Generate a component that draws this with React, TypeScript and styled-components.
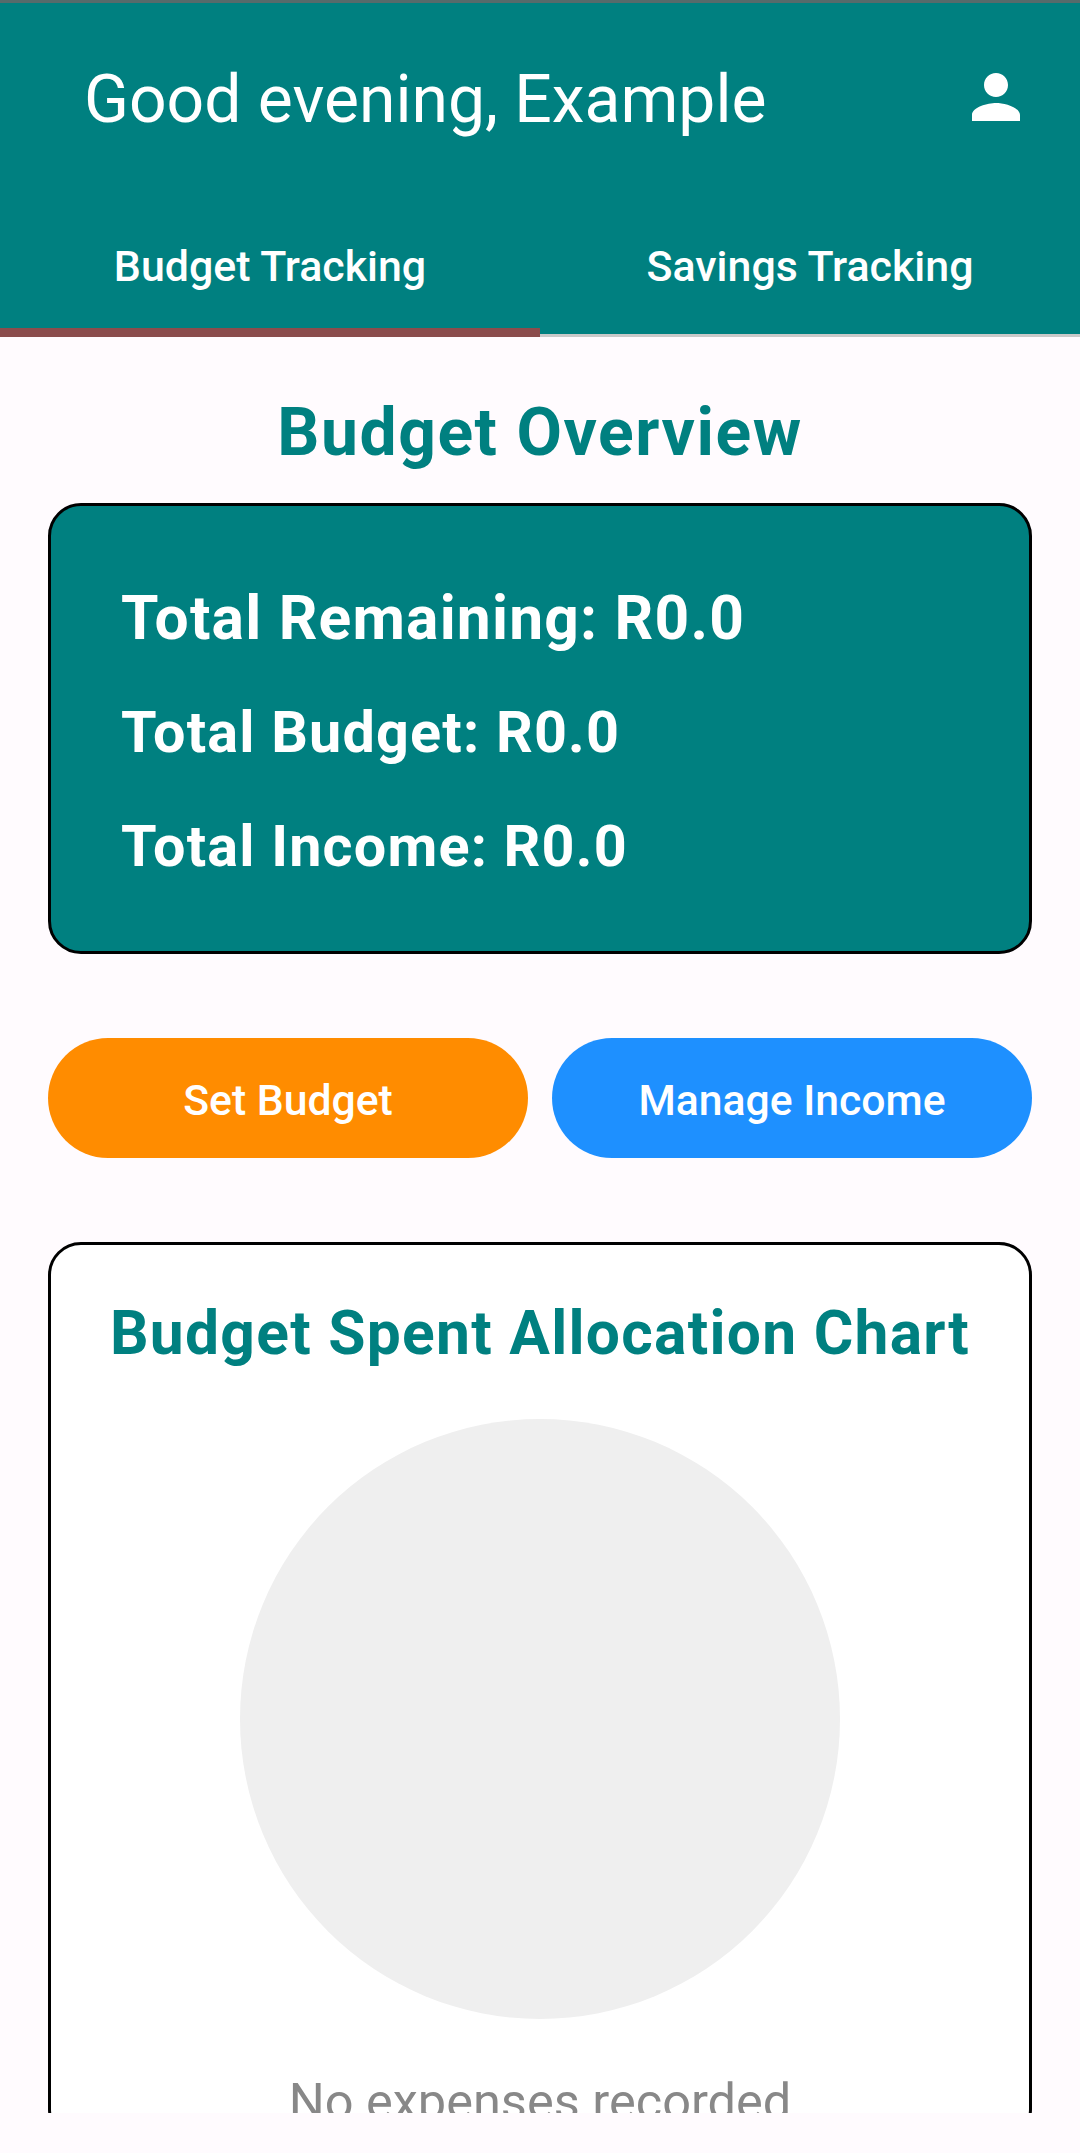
import React from "react";
import styled, { createGlobalStyle } from "styled-components";

const Global = createGlobalStyle`
  html, body { margin: 0; padding: 0; background: #fffbfe; }
  * { box-sizing: border-box; }
  body { font-family: Roboto, "Liberation Sans", sans-serif; }
`;
const TEAL = "#008080";

const Page = styled.div`
  width: 1080px;
  height: 2153px;
  background: #fffbfe;
  display: flex;
  flex-direction: column;
  overflow: hidden;
`;
const Header = styled.header`
  background: ${TEAL};
  border-top: 3px solid #566b6b;
  flex: none;
`;
const TopBar = styled.div`
  height: 194px;
  display: flex;
  align-items: center;
  justify-content: space-between;
  padding: 0 48px 0 84px;
`;
const Greeting = styled.h1`
  margin: 0;
  color: #fff;
  font-weight: 400;
  font-size: 66px;
  line-height: 78px;
`;
const ProfileIcon = styled.svg`
  width: 72px;
  height: 72px;
  fill: #fff;
  flex: none;
  margin-bottom: 6px;
`;
const Tabs = styled.div`
  display: flex;
  height: 140px;
`;
const Tab = styled.div<{ $active?: boolean }>`
  flex: 1;
  display: flex;
  align-items: center;
  justify-content: center;
  color: #fff;
  font-weight: 500;
  font-size: 42.9px;
  padding-bottom: 3px;
  box-shadow: inset 0 ${(p) => (p.$active ? "-9px 0 #8b4c4c" : "-3px 0 #c9c9c9")};
`;
const Scroll = styled.main`
  height: 1776px;
  flex: none;
  overflow: hidden;
  padding: 0 48px;
`;
const Heading = styled.h2`
  margin: 0;
  height: 166px;
  color: ${TEAL};
  text-align: center;
  font-weight: 700;
  font-size: 66px;
  line-height: 192px;
  letter-spacing: 1.55px;
`;
const Summary = styled.section`
  height: 451px;
  background: ${TEAL};
  border: 3px solid #000;
  border-radius: 33px;
  padding: 74px 0 0 70px;
  display: flex;
  flex-direction: column;
  gap: 37px;
`;
const SummaryLine = styled.div<{ $lead?: boolean }>`
  color: #fff;
  font-weight: 700;
  font-size: ${(p) => (p.$lead ? "60.5px" : "57.5px")};
  line-height: 77px;
  height: 77px;
  letter-spacing: 1.2px;
`;
const Actions = styled.div`
  display: grid;
  grid-template-columns: 1fr 1fr;
  gap: 24px;
  margin-top: 84px;
`;
const Action = styled.button<{ $bg: string }>`
  height: 120px;
  border: none;
  border-radius: 60px;
  padding: 3px 0 0;
  background: ${(p) => p.$bg};
  color: #fff;
  font-family: inherit;
  font-weight: 500;
  font-size: 42.7px;
`;
const ChartCard = styled.section`
  margin-top: 84px;
  height: 900px;
  background: #fff;
  border: 3px solid #000;
  border-radius: 33px;
  display: flex;
  flex-direction: column;
  align-items: center;
`;
const ChartTitle = styled.h3`
  margin: 50px 0 0;
  color: ${TEAL};
  font-weight: 700;
  font-size: 60.5px;
  line-height: 77px;
  letter-spacing: 1.28px;
  white-space: nowrap;
`;
const Donut = styled.div`
  margin-top: 47px;
  width: 600px;
  height: 600px;
  border-radius: 50%;
  background: #efefef;
  flex: none;
`;
const Empty = styled.p`
  margin: 55px 0 0;
  color: #888;
  font-size: 50.5px;
  line-height: 56px;
`;

export default function App() {
  return (
    <Page>
      <Global />
      <Header>
        <TopBar>
          <Greeting>Good evening, Example</Greeting>
          <ProfileIcon viewBox="0 0 24 24" aria-hidden="true">
            <path d="M12 12c2.21 0 4-1.79 4-4s-1.79-4-4-4-4 1.79-4 4 1.79 4 4 4zm0 2c-2.67 0-8 1.34-8 4v2h16v-2c0-2.66-5.33-4-8-4z" />
          </ProfileIcon>
        </TopBar>
        <Tabs>
          <Tab $active>Budget Tracking</Tab>
          <Tab>Savings Tracking</Tab>
        </Tabs>
      </Header>
      <Scroll>
        <Heading>Budget Overview</Heading>
        <Summary>
          <SummaryLine $lead>Total Remaining: R0.0</SummaryLine>
          <SummaryLine>Total Budget: R0.0</SummaryLine>
          <SummaryLine>Total Income: R0.0</SummaryLine>
        </Summary>
        <Actions>
          <Action $bg="#ff8c00">Set Budget</Action>
          <Action $bg="#1e90ff">Manage Income</Action>
        </Actions>
        <ChartCard>
          <ChartTitle>Budget Spent Allocation Chart</ChartTitle>
          <Donut />
          <Empty>No expenses recorded</Empty>
        </ChartCard>
      </Scroll>
    </Page>
  );
}
